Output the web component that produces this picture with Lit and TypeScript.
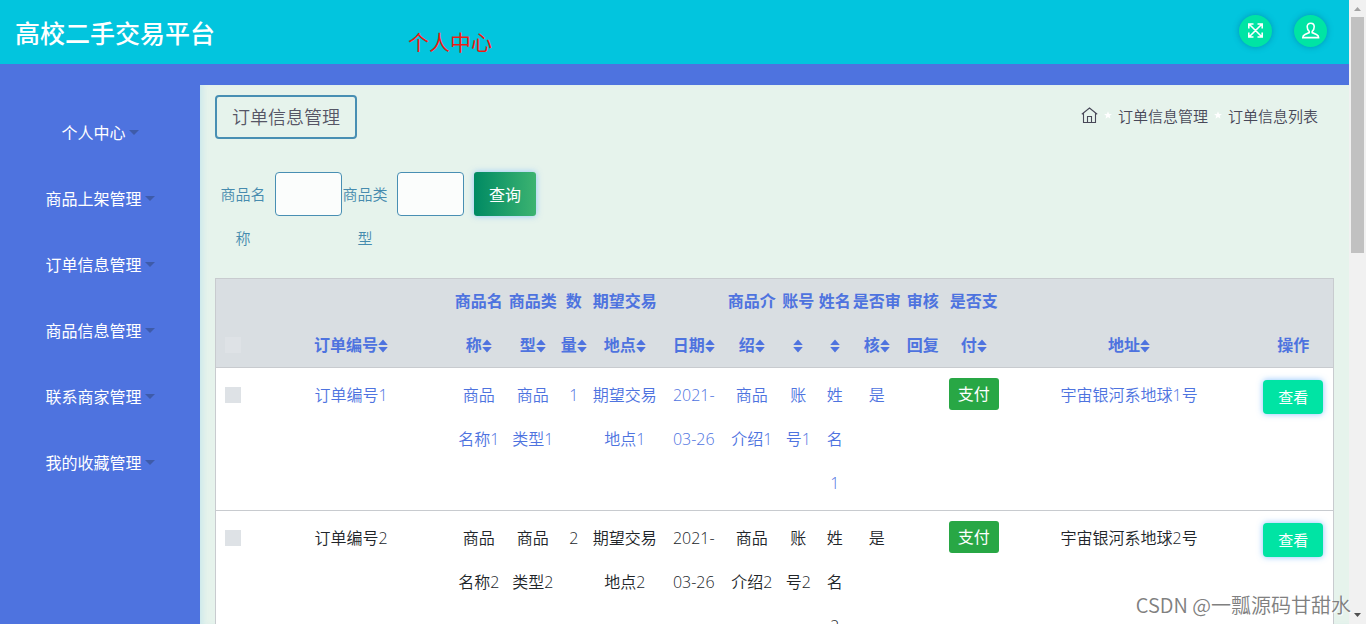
import { LitElement, html, css, svg } from "lit";
import { customElement } from "lit/decorators.js";

const MENU = ["个人中心", "商品上架管理", "订单信息管理", "商品信息管理", "联系商家管理", "我的收藏管理"];

interface Column {
  cls: string;
  lines: string[];
  sortable: boolean;
}

const COLUMNS: Column[] = [
  { cls: "w-order", lines: ["订单编号"], sortable: true },
  { cls: "w-name", lines: ["商品名", "称"], sortable: true },
  { cls: "w-name", lines: ["商品类", "型"], sortable: true },
  { cls: "w-qty", lines: ["数", "量"], sortable: true },
  { cls: "w-place", lines: ["期望交易", "地点"], sortable: true },
  { cls: "w-date", lines: ["日期"], sortable: true },
  { cls: "w-intro", lines: ["商品介", "绍"], sortable: true },
  { cls: "w-account", lines: ["账号", ""], sortable: true },
  { cls: "w-person", lines: ["姓名", ""], sortable: true },
  { cls: "w-intro", lines: ["是否审", "核"], sortable: true },
  { cls: "w-reply", lines: ["审核", "回复"], sortable: false },
  { cls: "w-pay", lines: ["是否支", "付"], sortable: true },
  { cls: "w-address", lines: ["地址"], sortable: true },
  { cls: "w-action", lines: ["操作"], sortable: false },
];

const rowCells = (n: number): string[][] => [
  [`订单编号${n}`],
  ["商品", `名称${n}`],
  ["商品", `类型${n}`],
  [`${n}`],
  ["期望交易", `地点${n}`],
  ["2021-", "03-26"],
  ["商品", `介绍${n}`],
  ["账", `号${n}`],
  ["姓", "名", `${n}`],
  ["是"],
  [],
];

const lineBreaks = (lines: string[]) => lines.map((t, i) => (i ? html`<br />${t}` : t));

const sortIcon = html`<svg class="sort" viewBox="0 0 10 14" aria-hidden="true">
  ${svg`<path d="M5 0.5 9.8 6H0.2zM0.2 8H9.8L5 13.5z" fill="currentColor"/>`}
</svg>`;

const star = html`<svg class="star" viewBox="0 0 10 10" aria-hidden="true">
  <path d="M5 1.2 6.1 4H9L6.7 5.8 7.5 8.8 5 7.1 2.5 8.8 3.3 5.8 1 4H3.9z" fill="#fff" />
</svg>`;

@customElement("app-root")
export class AppRoot extends LitElement {
  static styles = css`
    :host {
      display: grid;
      grid-template-columns: minmax(0, 1fr) 17px;
      height: 100vh;
      overflow: hidden;
      font-family: "Open Sans", "Noto Sans CJK SC", sans-serif;
      font-size: 16px;
      color: #212529;
      background: #4e73df;
    }
    * { box-sizing: border-box; }
    button, input { font: inherit; margin: 0; }
    button { cursor: pointer; padding: 0; border: 0; }
    a { color: inherit; text-decoration: none; }

    .page { display: flex; flex-direction: column; min-width: 0; height: 100vh; overflow: hidden; }
    .header {
      flex: none;
      display: grid;
      grid-template-columns: 393px 1fr auto;
      height: 64px;
      padding: 0 22px 0 15px;
      background: #02c5de;
    }
    .brand { margin: 0; font-size: 25px; font-weight: 500; line-height: 67px; color: #fff; }
    .center-link { font-size: 21px; line-height: 84px; color: #f11a12; }
    .tools { display: flex; gap: 22px; padding-top: 15px; }
    .round {
      width: 33px;
      height: 32px;
      border-radius: 50%;
      background: #00e4a4;
      color: #fff;
      display: grid;
      place-items: center;
      box-shadow: 0 0 6px rgba(0, 80, 120, 0.4);
    }
    .round svg { width: 18px; height: 18px; }

    .body { flex: 1; min-height: 0; display: grid; grid-template-columns: 200px minmax(0, 1fr); padding-top: 21px; }
    .menu { list-style: none; margin: 0; padding: 14px 0 0; }
    .menu a { display: flex; align-items: center; justify-content: center; gap: 3px; height: 66px; color: #fff; }
    .caret { border: 5px solid transparent; border-top-color: #3e5ba9; border-bottom: 0; }

    .content {
      overflow: hidden;
      padding: 10px 15px 0;
      background: #e6f3ec;
      box-shadow: inset 6px 0 6px -4px rgba(160, 215, 235, 0.45);
    }
    .top { display: flex; justify-content: space-between; align-items: flex-start; padding-right: 16px; }
    .title {
      margin: 0;
      padding: 0 15px;
      border: 2px solid #488fb3;
      border-radius: 4px;
      font-size: 18px;
      font-weight: 350;
      line-height: 40px;
      color: #565666;
    }
    .crumbs { display: flex; align-items: center; gap: 5px; height: 40px; font-size: 15px; font-weight: 350; color: #484858; }
    .crumbs a { display: flex; }
    .home { width: 17px; height: 17px; }
    .star { width: 10px; height: 10px; }

    .search { display: flex; align-items: flex-start; padding: 33px 0 18px 5px; font-size: 15px; color: #468bae; }
    .search label { width: 46px; margin-right: 9px; text-align: center; line-height: 44px; font-weight: 350; }
    .search input {
      width: 67px;
      height: 44px;
      padding: 0 8px;
      border: 1px solid #488fb3;
      border-radius: 4px;
      background: #fbfdfc;
    }
    .query {
      width: 62px;
      height: 44px;
      margin-left: 10px;
      border-radius: 3px;
      font-size: 16px;
      color: #fff;
      background: linear-gradient(90deg, #008a63, #3cb371);
      box-shadow: 0 0 6px rgba(110, 180, 255, 0.7);
    }

    table { width: 100%; table-layout: fixed; border-collapse: collapse; border: 1px solid #c8cbcf; background: #fff; }
    th, td { padding: 0; text-align: center; line-height: 44px; white-space: nowrap; border-bottom: 1px solid #c8cbcf; }
    th { vertical-align: bottom; font-weight: 600; color: #4e73df; background: #d9dee2; }
    td { padding: 5px 0; vertical-align: top; font-weight: 350; }
    .fresh { color: #4e73df; }
    .w-check { width: 35px; }
    .w-order { width: 18%; }
    .w-name { width: 54px; }
    .w-qty { width: 28px; }
    .w-place { width: 74px; }
    .w-date { width: 64px; }
    .w-intro { width: 52px; }
    .w-account { width: 41px; }
    .w-person { width: 32px; }
    .w-reply { width: 40px; }
    .w-pay { width: 62px; }
    .w-action { width: 80px; }
    .sort { width: 10px; height: 14px; vertical-align: -2px; }
    .tick {
      appearance: none;
      width: 16px;
      height: 16px;
      margin: 0;
      background: #dee2e6;
      vertical-align: -2px;
    }
    .pay, .view { display: inline-block; vertical-align: top; color: #fff; font-weight: 400; }
    .pay {
      width: 50px;
      height: 32px;
      margin-top: 5px;
      border-radius: 3px;
      background: #28a745;
      line-height: 32px;
    }
    .view {
      width: 60px;
      height: 34px;
      margin-top: 7px;
      border-radius: 4px;
      background: #00e4a4;
      font-size: 15px;
      line-height: 34px;
      box-shadow: 0 0 6px rgba(90, 170, 255, 0.7);
    }

    .scroll { display: flex; flex-direction: column; align-items: center; height: 100vh; background: #f1f1f1; }
    .scroll svg { flex: none; width: 17px; height: 17px; }
    .track { flex: 1; width: 13px; }
    .thumb { height: 40%; background: #c1c1c1; }

    .watermark {
      position: absolute;
      right: 15px;
      bottom: 4px;
      font-family: "Noto Sans CJK SC", sans-serif;
      font-size: 20px;
      font-weight: 350;
      line-height: 30px;
      color: #808080;
      text-shadow: 1px 1px 1px #fff;
      pointer-events: none;
    }
  `;

  private renderRow(n: number) {
    return html`<tr class=${n === 1 ? "fresh" : ""}>
      <td><input class="tick" type="checkbox" aria-label="选择订单编号${n}" /></td>
      ${rowCells(n).map((lines) => html`<td>${lineBreaks(lines)}</td>`)}
      <td><button class="pay">支付</button></td>
      <td>宇宙银河系地球${n}号</td>
      <td><button class="view">查看</button></td>
    </tr>`;
  }

  render() {
    return html`
      <div class="page">
        <header class="header">
          <h1 class="brand">高校二手交易平台</h1>
          <a class="center-link" href="#center">个人中心</a>
          <div class="tools">
            <button class="round" aria-label="全屏">
              <svg viewBox="0 0 18 18" fill="none" stroke="currentColor" stroke-width="1.6">
                <path d="M1.8 6.5V2H6.5M10.5 2H15.2V6.5M15.2 10.5V15H10.5M6.5 15H1.8V10.5M2 2 15 15M15 2 2 15" />
              </svg>
            </button>
            <button class="round" aria-label="用户">
              <svg viewBox="0 0 18 18" fill="none" stroke="currentColor" stroke-width="1.6">
                <path d="M8.7 1.2C6.4 1.2 5.2 2.6 5.2 4.8 5.2 6.8 6 8.4 7.2 9.3V10.6L3 12.4C1.4 13.1 0.8 14 0.8 15.6H16.6C16.6 14 16 13.1 14.4 12.4L10.2 10.6V9.3C11.4 8.4 12.2 6.8 12.2 4.8 12.2 2.6 11 1.2 8.7 1.2Z" />
              </svg>
            </button>
          </div>
        </header>
        <div class="body">
          <nav>
            <ul class="menu">
              ${MENU.map((m) => html`<li><a href="#menu">${m}<span class="caret"></span></a></li>`)}
            </ul>
          </nav>
          <main class="content">
            <div class="top">
              <h2 class="title">订单信息管理</h2>
              <nav class="crumbs">
                <a href="#home" aria-label="首页">
                  <svg class="home" viewBox="0 0 17 17" fill="none" stroke="currentColor" stroke-width="1.1">
                    <path d="M0.8 7.2 8.5 1 16.2 7.2M2.5 6V15.5H14.5V6M6.5 15.5V9.5H10.5V15.5" />
                  </svg>
                </a>
                ${star}<a href="#orders">订单信息管理</a>${star}<span>订单信息列表</span>
              </nav>
            </div>
            <form class="search">
              <label for="goods-name">商品名称</label><input id="goods-name" type="text" />
              <label for="goods-type">商品类型</label><input id="goods-type" type="text" />
              <button class="query" type="button">查询</button>
            </form>
            <table>
              <thead>
                <tr>
                  <th class="w-check"><input class="tick" type="checkbox" aria-label="全选" /></th>
                  ${COLUMNS.map(
                    (c) => html`<th class=${c.cls}>${lineBreaks(c.lines)}${c.sortable ? sortIcon : ""}</th>`
                  )}
                </tr>
              </thead>
              <tbody>
                ${[1, 2].map((n) => this.renderRow(n))}
              </tbody>
            </table>
          </main>
        </div>
      </div>
      <div class="scroll" aria-hidden="true">
        <svg viewBox="0 0 17 17"><path d="M5 11 8.5 7 12 11z" fill="#a3a3a3" /></svg>
        <div class="track"><div class="thumb"></div></div>
        <svg viewBox="0 0 17 17"><path d="M5 6 8.5 10 12 6z" fill="#505050" /></svg>
      </div>
      <div class="watermark">CSDN @一瓢源码甘甜水</div>
    `;
  }
}
